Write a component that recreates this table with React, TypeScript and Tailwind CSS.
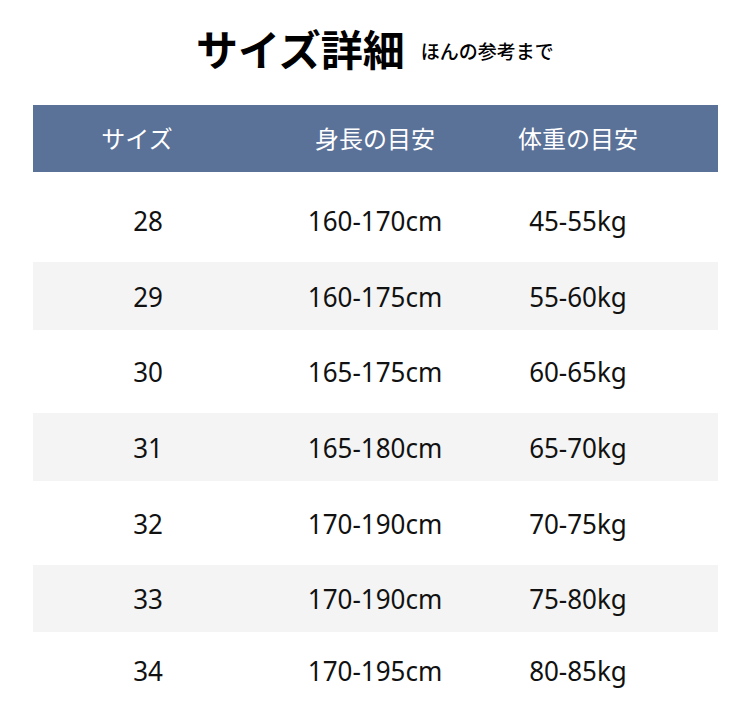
const rows = [
  { size: "28", height: "160-170cm", weight: "45-55kg", h: "h-[90px] pt-[6px]", bg: "bg-white" },
  { size: "29", height: "160-175cm", weight: "55-60kg", h: "h-[68px]", bg: "bg-[#f4f4f4]" },
  { size: "30", height: "165-175cm", weight: "60-65kg", h: "h-[83px]", bg: "bg-white" },
  { size: "31", height: "165-180cm", weight: "65-70kg", h: "h-[68px]", bg: "bg-[#f4f4f4]" },
  { size: "32", height: "170-190cm", weight: "70-75kg", h: "h-[84px]", bg: "bg-white" },
  { size: "33", height: "170-190cm", weight: "75-80kg", h: "h-[67px]", bg: "bg-[#f4f4f4]" },
  { size: "34", height: "170-195cm", weight: "80-85kg", h: "h-[77px]", bg: "bg-white" },
]

export default function App() {
  return (
    <div
      className="w-[750px] h-[709px] bg-white overflow-hidden"
      style={{ fontFamily: '"Noto Sans", "Noto Sans CJK JP", sans-serif' }}
    >
      {/* Title */}
      <div className="h-[105px] flex items-start justify-center gap-[16px] pt-[25px]">
        <h1 className="text-[42px] leading-[50px] font-bold text-black">サイズ詳細</h1>
        <span className="text-[19px] leading-[50px] font-medium text-black pt-[2px]">ほんの参考まで</span>
      </div>

      <div className="mx-[33px] w-[685px]">
        {/* Header */}
        <div className="grid grid-cols-[230px_224px_182px_1fr] h-[67px] items-center bg-[#5a7198] text-white text-[24px]">
          <div className="text-center pr-[22px]">サイズ</div>
          <div className="text-center">身長の目安</div>
          <div className="text-center">体重の目安</div>
          <div />
        </div>

        {/* Rows */}
        {rows.map((r) => (
          <div
            key={r.size}
            className={`grid grid-cols-[230px_224px_182px_1fr] items-center text-[26px] text-[#111] ${r.h} ${r.bg}`}
          >
            <div className="text-center">
              <span className="inline-block scale-y-[1.08]">{r.size}</span>
            </div>
            <div className="text-center">
              <span className="inline-block scale-y-[1.08]">{r.height}</span>
            </div>
            <div className="text-center">
              <span className="inline-block scale-y-[1.08]">{r.weight}</span>
            </div>
            <div />
          </div>
        ))}
      </div>
    </div>
  )
}
